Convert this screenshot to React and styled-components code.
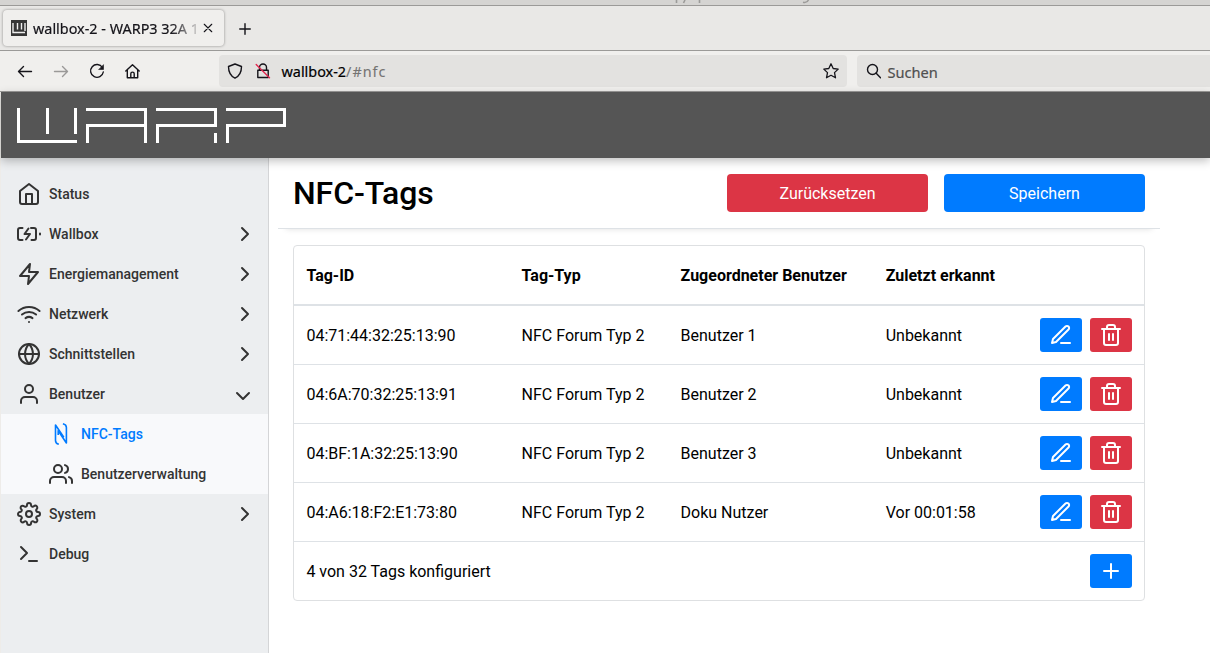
import React from "react";
import styled, { createGlobalStyle } from "styled-components";
import {
  FiHome, FiZap, FiWifi, FiGlobe, FiUser, FiUsers, FiSettings, FiTerminal,
  FiChevronRight, FiChevronDown, FiTrash2, FiPlus,
} from "react-icons/fi";

const GlobalStyle = createGlobalStyle`
  *, *::before, *::after { box-sizing: border-box; }
  body { margin: 0; background: #fff; overflow: hidden; font-family: Roboto, "Liberation Sans", sans-serif; }
  svg { display: block; flex: none; }
`;

const Window = styled.div`
  display: flex;
  flex-direction: column;
  width: 1210px;
  height: 653px;
  overflow: hidden;
  font-family: Roboto, "Liberation Sans", sans-serif;
`;

const DesktopEdge = styled.div`
  height: 6px;
  flex: none;
  background: #d5d4d2;
  border-bottom: 1px solid #9b9a98;
`;

const TabStrip = styled.div`
  display: flex;
  align-items: center;
  flex: none;
  height: 45px;
  padding: 0 0 1px 3px;
  background: #e9e8e6;
  border-bottom: 1px solid #9b9a98;
  font-family: "Noto Sans", sans-serif;
`;

const Tab = styled.div`
  display: flex;
  align-items: center;
  width: 221px;
  height: 36px;
  padding: 1px 10px 0 8px;
  background: #f0efed;
  border-radius: 4px;
  box-shadow: 0 0 3px rgba(0, 0, 0, 0.4);
`;

const TabTitle = styled.div`
  width: 167px;
  margin: 2px 3px 0 6px;
  white-space: nowrap;
  font-size: 14.4px;
  line-height: 20px;
  color: #15141a;
  -webkit-text-stroke: 0.2px #15141a;
  mask-image: linear-gradient(90deg, #000 138px, transparent 170px);
`;

const NewTab = styled.div`
  margin: 2px 0 0 15px;
`;

const Toolbar = styled.div`
  display: flex;
  align-items: center;
  flex: none;
  height: 41px;
  padding-left: 17px;
  background: #f0efed;
  border-bottom: 1px solid #9b9a98;
  font-family: "Noto Sans", sans-serif;
  color: #15141a;
`;

const NavButtons = styled.div`
  display: flex;
  gap: 20px;
  width: 202px;
`;

const Field = styled.div`
  display: flex;
  align-items: center;
  width: ${(p) => p.$width}px;
  height: 32px;
  padding: 0 8px;
  background: #e3e2e0;
  border-radius: ${(p) => (p.$open ? "4px 0 0 4px" : "4px")};
  margin-right: ${(p) => (p.$open ? 0 : 10)}px;
  flex: none;
`;

const Address = styled.div`
  flex: 1;
  margin: 1px 0 0 10.5px;
  font-size: 14.4px;
  color: #000;
  -webkit-text-stroke: 0.2px #000;
`;

const AddressPath = styled.span`
  color: #757473;
  letter-spacing: 1px;
  -webkit-text-stroke: 0.1px #757473;
`;

const Hint = styled.div`
  margin: 1px 0 0 6.5px;
  font-size: 14.6px;
  color: #505050;
  -webkit-text-stroke: 0.2px #505050;
`;

const Spacer = styled.div`
  width: 12px;
`;

const Viewport = styled.div`
  display: flex;
  flex-direction: column;
  flex: 1;
  min-height: 0;
  border-left: 1px solid #eeece9;
`;

const BrandBar = styled.header`
  position: relative;
  z-index: 2;
  flex: none;
  height: 66px;
  padding: 16px;
  background: #555;
  box-shadow: 0 3px 9px rgba(0, 0, 0, 0.25);
`;

const Body = styled.div`
  display: flex;
  flex: 1;
  min-height: 0;
`;

const Sidebar = styled.nav`
  flex: none;
  width: 268px;
  padding-top: 16px;
  background: #eceef0;
  border-right: 1px solid #d4d5d7;
`;

const NavItem = styled.div`
  display: flex;
  align-items: center;
  gap: 8px;
  height: 40px;
  padding: 0 ${(p) => (p.$open ? 13 : 11)}px 0 ${(p) => (p.$nested ? 48 : 16)}px;
  background: ${(p) => (p.$nested ? "#f8f9fb" : "transparent")};
  color: ${(p) => (p.$active ? "#007bff" : "#333")};
  font-size: 14px;
  font-weight: 500;
`;

const NavLabel = styled.span`
  flex: 1;
`;

const OpenMark = styled.div`
  padding-top: 4px;
`;

const Main = styled.main`
  flex: 1;
  padding-left: 9px;
`;

const PageHead = styled.div`
  display: flex;
  align-items: center;
  gap: 16px;
  width: 882px;
  height: 71px;
  padding: 0 15px 0 15px;
  border-bottom: 1px solid #dee2e6;
  box-shadow: 0 8px 6px -8px rgba(0, 0, 0, 0.13);
`;

const Title = styled.h1`
  flex: 1;
  margin: 0;
  font-size: 32px;
  line-height: 38px;
  font-weight: 500;
  letter-spacing: -0.1px;
  color: #000;
`;

const Action = styled.button`
  width: 201px;
  height: 38px;
  padding: 2px 0 0;
  border: 0;
  border-radius: 4px;
  background: ${(p) => p.$color};
  color: #fff;
  font: 400 16px/24px Roboto, "Liberation Sans", sans-serif;
`;

const Card = styled.section`
  width: 852px;
  margin: 16px 0 0 15px;
  border: 1px solid #dee0e2;
  border-radius: 4px;
`;

const Row = styled.div`
  display: grid;
  grid-template-columns: 215.2px 159px 205.1px 1fr auto;
  align-items: center;
  height: ${(p) => (p.$head ? 60 : p.$last ? 58 : 59)}px;
  padding: 0 12px 0 12.4px;
  border-bottom: ${(p) => (p.$last ? 0 : p.$head ? 2 : 1)}px solid #dee2e6;
  font-size: 16px;
  font-weight: ${(p) => (p.$head ? 700 : 400)};
  color: #000;
`;

const Wide = styled.div`
  grid-column: 1 / 5;
`;

const Buttons = styled.div`
  display: flex;
  gap: 8px;
`;

const IconButton = styled.button`
  display: flex;
  align-items: center;
  justify-content: center;
  width: 42px;
  height: 34px;
  padding: 0;
  border: 0;
  border-radius: 3px;
  background: ${(p) => p.$color};
  color: #fff;
`;

const RED = "#dc3545";
const BLUE = "#007bff";

const Line = ({ size = 16, width = 1.4, color = "#15141a", children }) => (
  <svg width={size} height={size} viewBox="0 0 16 16" fill="none" stroke={color}
    strokeWidth={width} strokeLinecap="round" strokeLinejoin="round">
    {children}
  </svg>
);

// Lower ends of the letters of the window behind this one
const BackgroundTitle = () => (
  <svg width="1210" height="5" viewBox="0 0 1210 5" fill="none" stroke="#9c9b99" strokeWidth="1.6">
    <path d="M676.500 0v3M685 0l-1.500 3M699.500 0v3M803 2.200q4 1 5.500-2.200" />
  </svg>
);

const Favicon = () => (
  <svg width="16" height="16" viewBox="0 0 16 16">
    <path d="M0 0h16v16H0z" fill="#363636" />
    <path d="M2 3v9.5h12M6.5 3v6.5M10.5 3v6.5M14 3v8" fill="none" stroke="#eee" strokeWidth="1.4" />
  </svg>
);

const WarpLogo = () => (
  <svg width="270" height="35" viewBox="0 0 270 35" fill="none" stroke="#fff" strokeWidth="3">
    <path d="M1.5 0v33.5H60M30.5 0v26M58.5 0v26" />
    <path d="M69 1.5h59.5V35M128.5 17.5h-58V35" />
    <path d="M139 1.5h59.5v16h-58V35M198.5 25v10" />
    <path d="M209 1.5h58.5v16h-57V35" />
  </svg>
);

const Stroke24 = ({ children }) => (
  <svg width="24" height="24" viewBox="0 0 24 24" fill="none" stroke="currentColor"
    strokeWidth="2" strokeLinecap="round" strokeLinejoin="round">
    {children}
  </svg>
);

const ChargerIcon = () => (
  <Stroke24>
    <path d="M5.5 6H3a2 2 0 0 0-2 2v8a2 2 0 0 0 2 2h2.5M14 6h3a2 2 0 0 1 2 2v8a2 2 0 0 1-2 2h-2.5" />
    <path d="M11.5 6.5 7.5 12H13l-4 5.5M23 12.5v-1" />
  </Stroke24>
);

const NfcIcon = () => (
  <svg width="24" height="24" viewBox="0 0 24 24" fill="none" stroke="currentColor"
    strokeWidth="1.6" strokeLinejoin="round">
    <path d="M9.800 22.300C7.500 21.700 6.500 20.700 6.500 18.500V3L14.800 15.300" />
    <path d="M13.900 1.700C16.500 2.300 17.400 3.300 17.400 5.500V21L9.200 8.700V13" />
  </svg>
);

const PenIcon = () => (
  <Stroke24>
    <path d="M12 20h9" />
    <path d="M16.5 3.5a2.121 2.121 0 0 1 3 3L7 19l-4 1 1-4L16.5 3.5z" />
  </Stroke24>
);

const NAV = [
  { label: "Status", icon: <FiHome size={24} /> },
  { label: "Wallbox", icon: <ChargerIcon />, closed: true },
  { label: "Energiemanagement", icon: <FiZap size={24} />, closed: true },
  { label: "Netzwerk", icon: <FiWifi size={24} />, closed: true },
  { label: "Schnittstellen", icon: <FiGlobe size={24} />, closed: true },
  { label: "Benutzer", icon: <FiUser size={24} />, open: true },
  { label: "NFC-Tags", icon: <NfcIcon />, nested: true, active: true },
  { label: "Benutzerverwaltung", icon: <FiUsers size={24} />, nested: true },
  { label: "System", icon: <FiSettings size={24} />, closed: true },
  { label: "Debug", icon: <FiTerminal size={24} /> },
];

const TAGS = [
  ["04:71:44:32:25:13:90", "NFC Forum Typ 2", "Benutzer 1", "Unbekannt"],
  ["04:6A:70:32:25:13:91", "NFC Forum Typ 2", "Benutzer 2", "Unbekannt"],
  ["04:BF:1A:32:25:13:90", "NFC Forum Typ 2", "Benutzer 3", "Unbekannt"],
  ["04:A6:18:F2:E1:73:80", "NFC Forum Typ 2", "Doku Nutzer", "Vor 00:01:58"],
];

export default function App() {
  return (
    <Window>
      <GlobalStyle />
      <DesktopEdge><BackgroundTitle /></DesktopEdge>
      <TabStrip>
        <Tab>
          <Favicon />
          <TabTitle>wallbox-2 - WARP3 32A 1</TabTitle>
          <Line size={10} width={1.8}><path d="M2 2l12 12M14 2 2 14" /></Line>
        </Tab>
        <NewTab><Line size={12} width={1.9}><path d="M8 1v14M1 8h14" /></Line></NewTab>
      </TabStrip>
      <Toolbar>
        <NavButtons>
          <Line><path d="M14.5 8.500H1.500M6.500 3.500l-5 5 5 5" /></Line>
          <Line color="#9a9998"><path d="M1.500 8.500h13M9.500 3.500l5 5-5 5" /></Line>
          <Line>
            <path d="M13.400 4.500A6.400 6.400 0 1 0 14.300 9" />
            <path d="M14.500 2v4.500H10z" fill="#15141a" strokeWidth="0.6" />
          </Line>
          <Line><path d="M.8 8l6.700-6.300L14.200 8M2.300 6.800v8h10.400v-8M5.800 14.600V10.800a1.700 1.700 0 0 1 3.400 0v3.800" /></Line>
        </NavButtons>
        <Field $width={628}>
          <Line><path d="M8 1 14.5 3.5C14.5 9 12.5 13 8 15.2 3.500 13 1.500 9 1.500 3.500z" /></Line>
          <Spacer />
          <Line>
            <path d="M4.500 7V4.500a3.500 3.500 0 0 1 7 0V7M2.800 7.200h10.4v7.300H2.800z" />
            <path d="M1.200 1.500 14.500 14.800" stroke="#e22850" />
          </Line>
          <Address>wallbox-2<AddressPath>/#nfc</AddressPath></Address>
          <Line width={1.3}><path d="M8 .8l2.200 4.700 5 .6-3.700 3.500 1 5.200L8 12.300l-4.500 2.500 1-5.200L.8 6.100l5-.6z" /></Line>
        </Field>
        <Field $width={353} $open>
          <Line><circle cx="7.500" cy="6.500" r="5" /><path d="M11.200 10.300 15.500 14.800" /></Line>
          <Hint>Suchen</Hint>
        </Field>
      </Toolbar>
      <Viewport>
        <BrandBar><WarpLogo /></BrandBar>
        <Body>
          <Sidebar>
            {NAV.map((n) => (
              <NavItem key={n.label} $nested={n.nested} $active={n.active} $open={n.open}>
                {n.icon}
                <NavLabel>{n.label}</NavLabel>
                {n.closed && <FiChevronRight size={24} />}
                {n.open && <OpenMark><FiChevronDown size={24} /></OpenMark>}
              </NavItem>
            ))}
          </Sidebar>
          <Main>
            <PageHead>
              <Title>NFC-Tags</Title>
              <Action $color={RED}>Zurücksetzen</Action>
              <Action $color={BLUE}>Speichern</Action>
            </PageHead>
            <Card>
              <Row $head>
                <div>Tag-ID</div>
                <div>Tag-Typ</div>
                <div>Zugeordneter Benutzer</div>
                <div>Zuletzt erkannt</div>
              </Row>
              {TAGS.map((t) => (
                <Row key={t[0]}>
                  {t.map((v) => <div key={v}>{v}</div>)}
                  <Buttons>
                    <IconButton $color={BLUE}><PenIcon /></IconButton>
                    <IconButton $color={RED}><FiTrash2 size={24} /></IconButton>
                  </Buttons>
                </Row>
              ))}
              <Row $last>
                <Wide>4 von 32 Tags konfiguriert</Wide>
                <IconButton $color={BLUE}><FiPlus size={24} /></IconButton>
              </Row>
            </Card>
          </Main>
        </Body>
      </Viewport>
    </Window>
  );
}
